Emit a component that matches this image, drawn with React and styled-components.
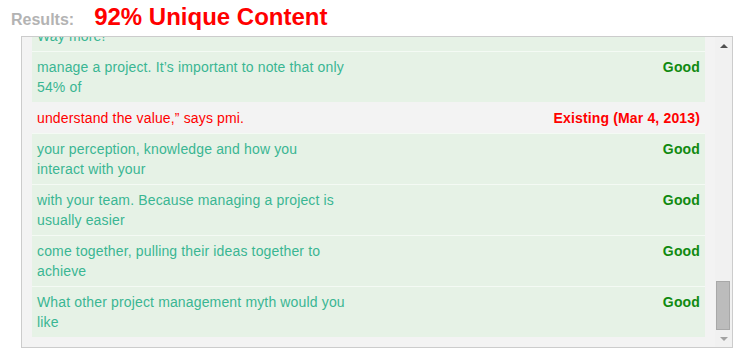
import React from "react"
import styled, { createGlobalStyle } from "styled-components"

const rows = [
  { text: "they think it is only about the schedule.\nWay more!", status: "Good" },
  { text: "manage a project. It’s important to note that only 54% of", status: "Good" },
  { text: "understand the value,” says pmi.", status: "Existing (Mar 4, 2013)", existing: true },
  { text: "your perception, knowledge and how you interact with your", status: "Good" },
  { text: "with your team. Because managing a project is usually easier", status: "Good" },
  { text: "come together, pulling their ideas together to achieve", status: "Good" },
  { text: "What other project management myth would you like", status: "Good" },
]

const GlobalStyle = createGlobalStyle`
  body {
    margin: 0;
    background: #fff;
    font-family: "Liberation Sans", Arial, sans-serif;
  }
`

const App = () => {
  return (
    <Page>
      <GlobalStyle />
      <Header>
        <Label>Results:</Label>
        <Score>92% Unique Content</Score>
      </Header>
      <ResultsBox>
        <Viewport>
          <List>
            {rows.map((row, index) => (
              <Row key={index} existing={row.existing}>
                <Sentence existing={row.existing}>{row.text}</Sentence>
                <Status existing={row.existing}>{row.status}</Status>
              </Row>
            ))}
          </List>
        </Viewport>
        <Scrollbar>
          <Arrow />
          <Track>
            <Thumb />
          </Track>
          <Arrow down />
        </Scrollbar>
      </ResultsBox>
    </Page>
  )
}

export default App

const Page = styled.div`
  width: 738px;
  height: 356px;
  padding-left: 10px;
  box-sizing: border-box;
`

const Header = styled.div`
  height: 36px;
  box-sizing: border-box;
  padding-top: 3px;
  display: flex;
  align-items: baseline;
  gap: 20px;
`

const Label = styled.span`
  font-size: 16px;
  font-weight: bold;
  color: #b3b3b3;
  margin-left: 1px;
`

const Score = styled.span`
  font-size: 24px;
  font-weight: bold;
  color: #ff0000;
`

const ResultsBox = styled.div`
  margin-left: 11px;
  width: 712px;
  height: 312px;
  box-sizing: border-box;
  border: 1px solid #cccccc;
  background: #f3f3f3;
  display: flex;
`

const Viewport = styled.div`
  flex: 1;
  height: 310px;
  overflow: hidden;
  display: flex;
  flex-direction: column;
  justify-content: flex-end;
  padding: 0 10px 10px 10px;
  box-sizing: border-box;
`

const List = styled.div`
  flex-shrink: 0;
  display: flex;
  flex-direction: column;
`

const Row = styled.div`
  display: flex;
  justify-content: space-between;
  align-items: flex-start;
  padding: 5px;
  border-top: 1px solid ${(p) => (p.existing ? "#f3f3f3" : "#f4faf4")};
  background: ${(p) => (p.existing ? "transparent" : "#e6f2e6")};
  font-size: 14px;
  line-height: 20px;
  letter-spacing: 0.15px;
`

const Sentence = styled.div`
  width: 310px;
  white-space: pre-line;
  color: ${(p) => (p.existing ? "#ff0000" : "#3ab693")};
`

const Status = styled.div`
  font-weight: bold;
  color: ${(p) => (p.existing ? "#ff0000" : "#108a10")};
`

const Scrollbar = styled.div`
  width: 17px;
  display: flex;
  flex-direction: column;
  background: #f1f1f1;
`

const Arrow = styled.div`
  height: 17px;
  display: flex;
  align-items: center;
  justify-content: center;

  &::before {
    content: "";
    border-left: 4px solid transparent;
    border-right: 4px solid transparent;
    ${(p) =>
      p.down
        ? "border-top: 4px solid #a3a3a3;"
        : "border-bottom: 4px solid #505050;"}
  }
`

const Track = styled.div`
  flex: 1;
  display: flex;
  flex-direction: column;
  justify-content: flex-end;
  padding: 0 2px 0 1px;
`

const Thumb = styled.div`
  height: 47px;
  background: #bcbcbc;
  border: 1px solid #a8a8a8;
`
